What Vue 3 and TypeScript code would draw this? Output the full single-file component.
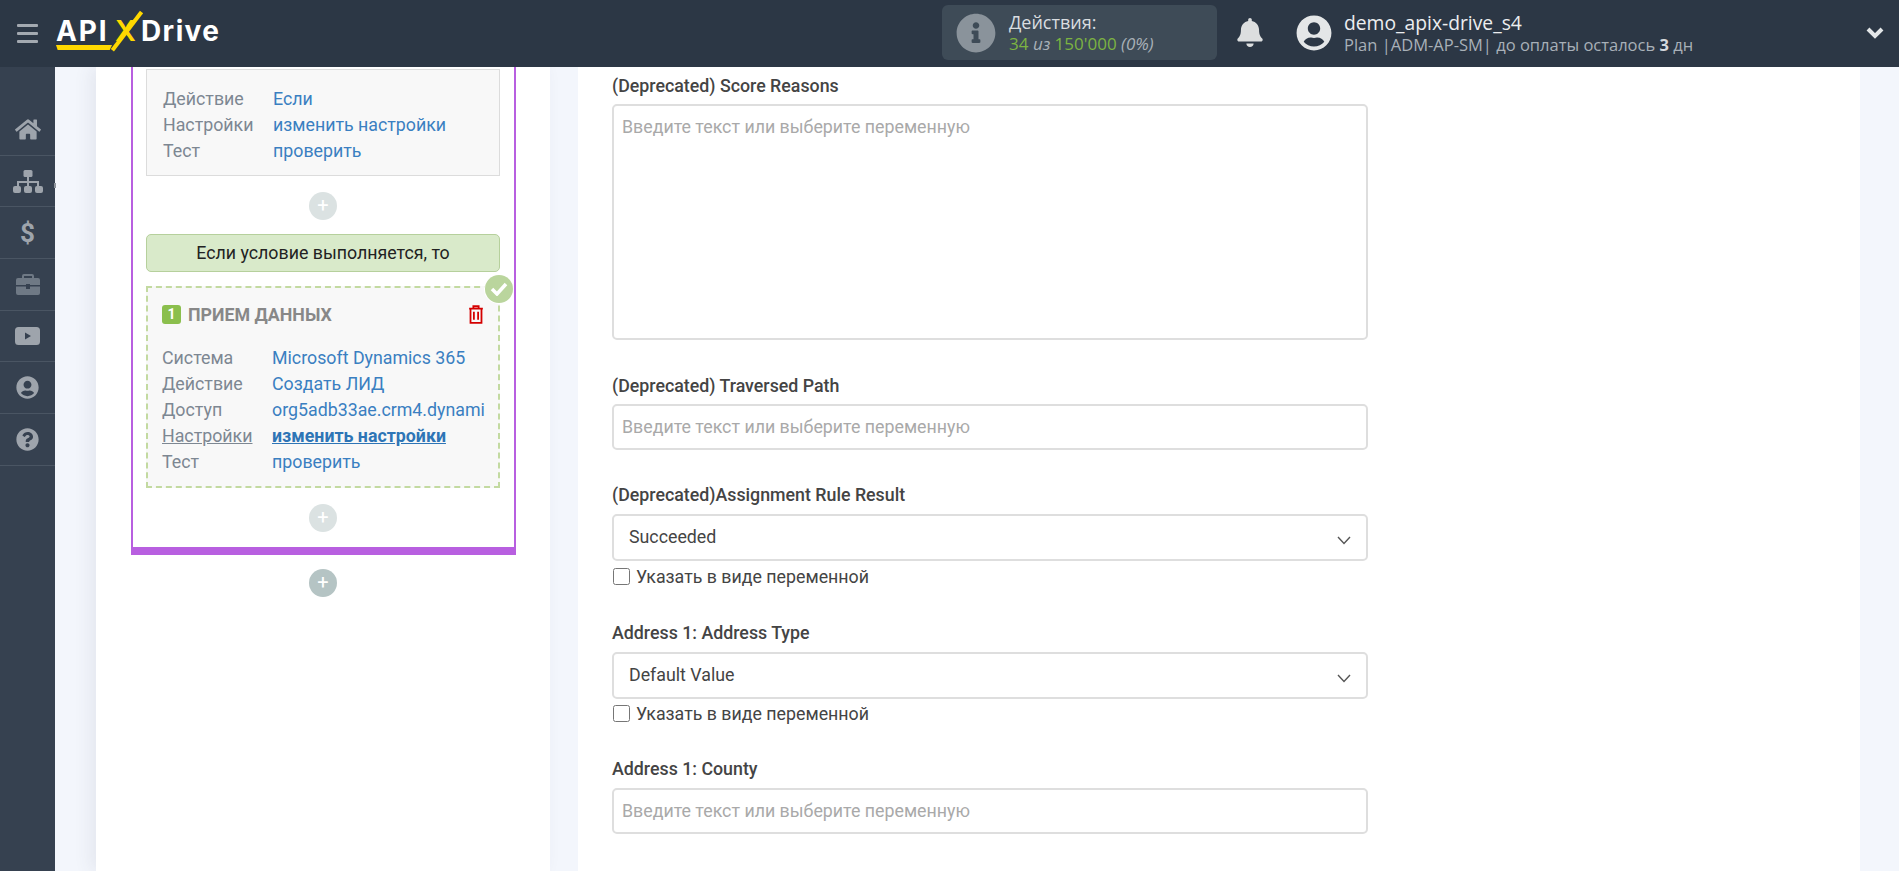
<script setup lang="ts">
const topRows = [
  { k: 'Действие', v: 'Если' },
  { k: 'Настройки', v: 'изменить настройки' },
  { k: 'Тест', v: 'проверить' },
]
const stepRows = [
  { k: 'Система', v: 'Microsoft Dynamics 365', active: false },
  { k: 'Действие', v: 'Создать ЛИД', active: false },
  { k: 'Доступ', v: 'org5adb33ae.crm4.dynami', active: false },
  { k: 'Настройки', v: 'изменить настройки', active: true },
  { k: 'Тест', v: 'проверить', active: false },
]
const placeholder = 'Введите текст или выберите переменную'
</script>

<template>
  <div class="page">
    <header class="topbar">
      <div class="burger"><i></i><i></i><i></i></div>
      <div class="logo">
        <span class="api">API</span><b class="api-line"></b><span class="x">X<b class="x-tail"></b></span><span class="drive">Drive</span>
      </div>
      <div class="actions">
        <svg class="info-circle" viewBox="0 0 512 512"><path fill="#8a939b" d="M256 8C119.043 8 8 119.083 8 256c0 136.997 111.043 248 248 248s248-111.003 248-248C504 119.083 392.957 8 256 8zm0 110c23.196 0 42 18.804 42 42s-18.804 42-42 42-42-18.804-42-42 18.804-42 42-42zm56 254c0 6.627-5.373 12-12 12h-88c-6.627 0-12-5.373-12-12v-24c0-6.627 5.373-12 12-12h12v-64h-12c-6.627 0-12-5.373-12-12v-24c0-6.627 5.373-12 12-12h64c6.627 0 12 5.373 12 12v100h12c6.627 0 12 5.373 12 12v24z"/></svg>
        <div class="actions-text">
          <div class="actions-title">Действия:</div>
          <div class="actions-count"><span class="green">34</span> <em>из</em> <span class="green">150'000</span> <em>(0%)</em></div>
        </div>
      </div>
      <svg class="bell" viewBox="0 0 448 512"><path fill="#dcdedf" d="M224 512c35.32 0 63.97-28.65 63.97-64H160.03c0 35.35 28.65 64 63.97 64zm215.39-149.71c-19.32-20.76-55.47-51.99-55.47-154.29 0-77.7-54.48-139.9-127.94-155.16V32c0-17.67-14.32-32-31.98-32s-31.98 14.33-31.98 32v20.84C118.56 68.1 64.08 130.3 64.08 208c0 102.3-36.15 133.53-55.47 154.29-6 6.45-8.66 14.16-8.61 21.71.11 16.4 12.98 32 32.1 32h383.8c19.12 0 32-15.6 32.1-32 .05-7.55-2.61-15.27-8.61-21.71z"/></svg>
      <svg class="avatar" viewBox="0 0 496 512"><path fill="#e4e6e7" d="M248 8C111 8 0 119 0 256s111 248 248 248 248-111 248-248S385 8 248 8zm0 96c48.6 0 88 39.4 88 88s-39.4 88-88 88-88-39.4-88-88 39.4-88 88-88zm0 344c-58.7 0-111.3-26.6-146.5-68.2 18.8-35.4 55.6-59.8 98.5-59.8 2.4 0 4.8.4 7.1 1.1 13 4.2 26.6 6.9 40.9 6.9 14.3 0 28-2.7 40.9-6.9 2.3-.7 4.7-1.1 7.1-1.1 42.9 0 79.7 24.4 98.5 59.8C359.3 421.4 306.7 448 248 448z"/></svg>
      <div class="user">
        <div class="user-name">demo_apix-drive_s4</div>
        <div class="user-plan">Plan |ADM-AP-SM| до оплаты осталось <b>3</b> дн</div>
      </div>
      <svg class="top-chevron" viewBox="0 0 20 14"><path d="M3 3l7 7 7-7" fill="none" stroke="#e3e6e8" stroke-width="4"/></svg>
    </header>

    <div class="body">
      <nav class="sidebar">
        <div class="nav-item">
          <svg width="26" height="23" viewBox="0 0 576 512"><path d="M280.37 148.26L96 300.11V464a16 16 0 0 0 16 16l112.06-.29a16 16 0 0 0 15.92-16V368a16 16 0 0 1 16-16h64a16 16 0 0 1 16 16v95.64a16 16 0 0 0 16 16.05L464 480a16 16 0 0 0 16-16V300L295.67 148.26a12.19 12.19 0 0 0-15.3 0zM571.6 251.47L488 182.56V44.05a12 12 0 0 0-12-12h-56a12 12 0 0 0-12 12v72.61L318.47 43a48 48 0 0 0-61 0L4.34 251.47a12 12 0 0 0-1.6 16.9l25.5 31A12 12 0 0 0 45.15 301l235.22-193.74a12.19 12.19 0 0 1 15.3 0L530.9 301a12 12 0 0 0 16.9-1.6l25.5-31a12 12 0 0 0-1.7-16.93z"/></svg>
        </div>
        <div class="nav-item">
          <svg width="30" height="23" viewBox="0 0 30 23"><rect x="10.500" y="0" width="9" height="7" rx="1.500"/><rect x="0" y="16" width="8" height="7" rx="2"/><rect x="11" y="16" width="8" height="7" rx="2"/><rect x="22" y="16" width="8" height="7" rx="2"/><path d="M14 7h2v4h10v5h-2v-3H16v3h-2v-3H6v3H4v-5h10z"/></svg>
          <span class="tip-stub"></span>
        </div>
        <div class="nav-item"><span class="dollar">$</span></div>
        <div class="nav-item dim">
          <svg width="24" height="21" viewBox="0 0 24 21"><path d="M8 0h8a2 2 0 0 1 2 2v2h4a2 2 0 0 1 2 2v5H14v-1h-4v1H0V6a2 2 0 0 1 2-2h4V2a2 2 0 0 1 2-2zm0 2v2h8V2z"/><path d="M0 12.500h10V15h4v-2.500h10V19a2 2 0 0 1-2 2H2a2 2 0 0 1-2-2z"/></svg>
        </div>
        <div class="nav-item">
          <svg width="25" height="18" viewBox="0 0 25 18"><path fill-rule="evenodd" d="M3.500 0h18A3.500 3.500 0 0 1 25 3.500v11a3.500 3.500 0 0 1-3.500 3.500h-18A3.500 3.500 0 0 1 0 14.500v-11A3.500 3.500 0 0 1 3.500 0zM10 5.500v7L16 9z"/></svg>
        </div>
        <div class="nav-item">
          <svg width="23" height="23" viewBox="0 0 496 512"><path d="M248 8C111 8 0 119 0 256s111 248 248 248 248-111 248-248S385 8 248 8zm0 96c48.6 0 88 39.4 88 88s-39.4 88-88 88-88-39.4-88-88 39.4-88 88-88zm0 344c-58.7 0-111.3-26.6-146.5-68.2 18.8-35.4 55.6-59.8 98.5-59.8 2.4 0 4.8.4 7.1 1.1 13 4.2 26.6 6.9 40.9 6.9 14.3 0 28-2.7 40.9-6.9 2.3-.7 4.7-1.1 7.1-1.1 42.9 0 79.7 24.4 98.5 59.8C359.3 421.4 306.7 448 248 448z"/></svg>
        </div>
        <div class="nav-item">
          <svg width="23" height="23" viewBox="0 0 512 512"><path d="M504 256c0 136.997-111.043 248-248 248S8 392.997 8 256C8 119.083 119.043 8 256 8s248 111.083 248 248zM262.655 90c-54.497 0-89.255 22.957-116.549 63.758-3.536 5.286-2.353 12.415 2.715 16.258l34.699 26.31c5.205 3.947 12.621 3.008 16.665-2.122 17.864-22.658 30.113-35.797 57.303-35.797 20.429 0 45.698 13.148 45.698 32.958 0 14.976-12.363 22.667-32.534 33.976C247.128 238.528 216 254.941 216 296v4c0 6.627 5.373 12 12 12h56c6.627 0 12-5.373 12-12v-1.333c0-28.462 83.186-29.647 83.186-106.667 0-58.002-60.165-102-116.531-102zM256 338c-25.365 0-46 20.635-46 46 0 25.364 20.635 46 46 46s46-20.636 46-46c0-25.365-20.635-46-46-46z"/></svg>
        </div>
      </nav>

      <main class="content">
        <section class="panel-left">
          <div class="purple">
            <div class="card">
              <div v-for="r in topRows" :key="r.k" class="row">
                <span class="row-k">{{ r.k }}</span><a class="row-v">{{ r.v }}</a>
              </div>
            </div>
            <div class="plus light plus-a">+</div>
            <div class="condition">Если условие выполняется, то</div>
            <div class="step">
              <div class="check-badge">
                <svg width="18" height="14" viewBox="0 0 18 14"><path d="M2 7l5 5 9-10" fill="none" stroke="#fff" stroke-width="3.500"/></svg>
              </div>
              <div class="step-head">
                <span class="num">1</span>
                <span class="step-title">ПРИЕМ ДАННЫХ</span>
                <svg class="trash" width="16" height="19" viewBox="0 0 15 18"><path d="M1 3.500h13M5 3.500V1.200h5v2.300M2.300 3.500V17h10.400V3.500M5.500 6.500v7.500M9.500 6.500v7.500" fill="none" stroke="#d40000" stroke-width="1.700"/></svg>
              </div>
              <div v-for="r in stepRows" :key="r.k" class="row">
                <span class="row-k" :class="{ 'is-active': r.active }">{{ r.k }}</span><a class="row-v" :class="{ 'is-active': r.active }">{{ r.v }}</a>
              </div>
            </div>
            <div class="plus light plus-b">+</div>
          </div>
          <div class="plus dark plus-c">+</div>
        </section>

        <section class="panel-right">
          <div class="field">
            <label class="flabel">(Deprecated) Score Reasons</label>
            <textarea class="control area" :placeholder="placeholder"></textarea>
          </div>
          <div class="field">
            <label class="flabel">(Deprecated) Traversed Path</label>
            <input class="control text-in" type="text" :placeholder="placeholder" />
          </div>
          <div class="field">
            <label class="flabel">(Deprecated)Assignment Rule Result</label>
            <div class="control sel">
              <span>Succeeded</span>
              <svg width="14" height="9" viewBox="0 0 14 9"><path d="M1 1l6 6.500L13 1" fill="none" stroke="#555" stroke-width="1.400"/></svg>
            </div>
            <label class="var-row"><input type="checkbox" class="cb" /><span>Указать в виде переменной</span></label>
          </div>
          <div class="field">
            <label class="flabel">Address 1: Address Type</label>
            <div class="control sel">
              <span>Default Value</span>
              <svg width="14" height="9" viewBox="0 0 14 9"><path d="M1 1l6 6.500L13 1" fill="none" stroke="#555" stroke-width="1.400"/></svg>
            </div>
            <label class="var-row tight"><input type="checkbox" class="cb" /><span>Указать в виде переменной</span></label>
          </div>
          <div class="field">
            <label class="flabel">Address 1: County</label>
            <input class="control text-in" type="text" :placeholder="placeholder" />
          </div>
        </section>
      </main>
    </div>
  </div>
</template>

<style>
html, body { margin: 0; overflow: hidden; }
</style>

<style scoped>
.page {
  width: 1899px;
  height: 871px;
  overflow: hidden;
  font-family: Roboto, "Liberation Sans", sans-serif;
  background: #f3f6fc;
  color: #444;
}
.topbar {
  height: 67px;
  background: #2c3745;
  display: flex;
  align-items: center;
  position: relative;
}
.burger {
  width: 21px;
  margin-left: 17px;
  display: flex;
  flex-direction: column;
  gap: 4.500px;
}
.burger i {
  display: block;
  height: 3.500px;
  background: #a3a9b0;
  border-radius: 1px;
}
.logo {
  margin-left: 17px;
  width: 167px;
  height: 46px;
  display: flex;
  align-items: center;
  position: relative;
  font-family: Inter, "Open Sans", sans-serif;
  font-weight: 700;
  color: #fff;
  font-size: 28px;
}
.api { width: 60px; flex: none; letter-spacing: 1.800px; padding-left: 1px; box-sizing: border-box; margin-top: -5px; }
.api-line {
  position: absolute;
  left: 1px;
  top: 34.500px;
  width: 56px;
  height: 5px;
  background: #ffd800;
  clip-path: polygon(0 0, 100% 0, 96% 100%, 3% 100%);
}
.x {
  position: relative;
  width: 26px;
  flex: none;
  color: #ffd800;
  font-size: 29px;
  font-weight: 600;
  line-height: 46px;
  margin-top: -6px;
}
.x-tail {
  position: absolute;
  left: 9.500px;
  top: -0.500px;
  width: 3.500px;
  height: 48px;
  background: #ffd800;
  transform: rotate(37.400deg);
  display: block;
}
.drive { letter-spacing: 1.400px; margin-top: -5px; }
.actions {
  position: absolute;
  left: 942px;
  top: 5px;
  width: 275px;
  height: 55px;
  background: #3e4b57;
  border-radius: 6px;
  display: flex;
  align-items: center;
}
.info-circle {
  width: 40px;
  height: 40px;
  margin-left: 14px;
  flex: none;
}
.actions-text {
  margin-left: 13px;
  line-height: 22px;
  font-family: "Open Sans", Roboto, sans-serif;
}
.actions-title { color: #d9dde0; font-size: 18px; }
.actions-count { color: #a9b1b8; font-size: 17px; }
.actions-count em { font-style: italic; }
.green { color: #7cb342; }
.bell {
  position: absolute;
  left: 1237px;
  top: 18px;
  width: 26px;
  height: 29px;
}
.avatar {
  position: absolute;
  left: 1296px;
  top: 15px;
  width: 36px;
  height: 36px;
}
.user {
  position: absolute;
  left: 1344px;
  top: 11px;
  font-family: "Open Sans", Roboto, sans-serif;
}
.user-name { font-size: 19.300px; line-height: 24px; color: #eceef0; }
.user-plan { font-size: 16.500px; line-height: 20px; color: #a8b0b8; }
.user-plan b { color: #d5d9dd; }
.top-chevron {
  position: absolute;
  left: 1865px;
  top: 26px;
  width: 20px;
  height: 14px;
}
.body {
  height: 804px;
  display: flex;
  overflow: hidden;
}
.sidebar {
  width: 55px;
  flex: none;
  background: #364150;
  padding-top: 37px;
  box-sizing: border-box;
}
.nav-item {
  height: 51.700px;
  box-sizing: border-box;
  border-bottom: 1px solid #4a5563;
  display: flex;
  align-items: center;
  justify-content: center;
  position: relative;
  fill: #9ea4ac;
}
.nav-item.dim { fill: #6f7985; }
.dollar { color: #9ea4ac; font-weight: 700; font-size: 26px; }
.tip-stub {
  position: absolute;
  right: -1px;
  top: 27px;
  width: 2px;
  height: 5px;
  background: #8d939b;
}
.content {
  flex: 1;
  display: flex;
  padding-left: 41px;
  gap: 28px;
}
.panel-left {
  width: 454px;
  flex: none;
  background: #fff;
  box-shadow: -6px 0 16px rgba(60, 70, 90, 0.08);
  padding-left: 35px;
  box-sizing: border-box;
  height: 804px;
}
.purple {
  width: 385px;
  box-sizing: border-box;
  border: 2px solid #b85fe0;
  border-top: 0;
  border-bottom-width: 8px;
  padding: 2px 14px 15px 13px;
}
.card {
  height: 107px;
  box-sizing: border-box;
  background: #f8f8f8;
  border: 1px solid #dcdcdc;
  padding: 16px 16px 0;
}
.row {
  display: flex;
  height: 26px;
  line-height: 26px;
  font-size: 17.800px;
  white-space: nowrap;
}
.row-k { width: 110px; flex: none; color: #7d8792; }
.row-v { color: #3a7fc1; }
.row-k.is-active { text-decoration: underline; }
.row-v.is-active { font-weight: 700; text-decoration: underline; color: #2e75b6; }
.plus {
  width: 28px;
  height: 28px;
  border-radius: 50%;
  color: #fff;
  font-size: 20px;
  line-height: 27px;
  text-align: center;
  margin: 0 auto;
}
.plus.light { background: #dbe2e2; }
.plus.dark { background: #b5c4c4; }
.plus-a { margin-top: 16px; margin-bottom: 14px; }
.plus-b { margin-top: 16px; }
.plus-c { margin: 14px 0 0 178px; }
.condition {
  height: 38px;
  box-sizing: border-box;
  background: #d9eaca;
  border: 1px solid #b6d09c;
  border-radius: 5px;
  color: #222;
  font-size: 17.800px;
  line-height: 36px;
  text-align: center;
}
.step {
  margin-top: 14px;
  height: 202px;
  box-sizing: border-box;
  background: #f8f8f8;
  border: 2px dashed #c3daa1;
  padding: 15px 14px 0;
  position: relative;
}
.check-badge {
  position: absolute;
  right: -15px;
  top: -13px;
  width: 28px;
  height: 28px;
  border-radius: 50%;
  background: #bad59d;
  box-shadow: 0 0 0 1px #fff;
  display: flex;
  align-items: center;
  justify-content: center;
}
.step-head {
  display: flex;
  align-items: center;
  height: 22px;
  margin-bottom: 20px;
}
.num {
  width: 19px;
  height: 19px;
  background: #8bbf4d;
  border-radius: 3px;
  color: #fff;
  font-size: 14px;
  font-weight: 700;
  line-height: 19px;
  text-align: center;
}
.step-title {
  margin-left: 7px;
  font-weight: 700;
  font-size: 17.800px;
  color: #888;
  flex: 1;
}
.panel-right {
  flex: none;
  width: 1282px;
  height: 804px;
  box-sizing: border-box;
  background: #fff;
  padding: 8px 0 0 34px;
}
.field { margin-bottom: 35px; width: 756px; }
.flabel {
  display: block;
  height: 20px;
  line-height: 19px;
  margin-bottom: 9px;
  font-size: 17.800px;
  font-weight: 500;
  color: #444;
}
.field:nth-child(-n + 2) .flabel { line-height: 21px; }
.control {
  display: block;
  width: 756px;
  box-sizing: border-box;
  border: 2px solid #dedede;
  border-radius: 5px;
  background: #fff;
  font-family: Roboto, "Liberation Sans", sans-serif;
  font-size: 17.800px;
  color: #444;
  outline: none;
}
.control::placeholder { color: #a9a9a9; opacity: 1; }
.area {
  height: 236px;
  padding: 10px 8px;
  resize: none;
  line-height: 21px;
}
.text-in { height: 46px; padding: 0 8px 2px; }
.sel {
  height: 47px;
  padding: 0 15px 2px 15px;
  display: flex;
  align-items: center;
  justify-content: space-between;
}
.sel svg { margin-top: 7px; }
.var-row {
  display: flex;
  align-items: center;
  height: 21px;
  margin-top: 5px;
  padding-bottom: 1px;
  font-size: 17.800px;
  color: #444;
}
.var-row.tight { margin-top: 4px; padding-bottom: 0; }
.cb {
  width: 17px;
  height: 17px;
  margin: 0 6px 0 1px;
}
</style>
